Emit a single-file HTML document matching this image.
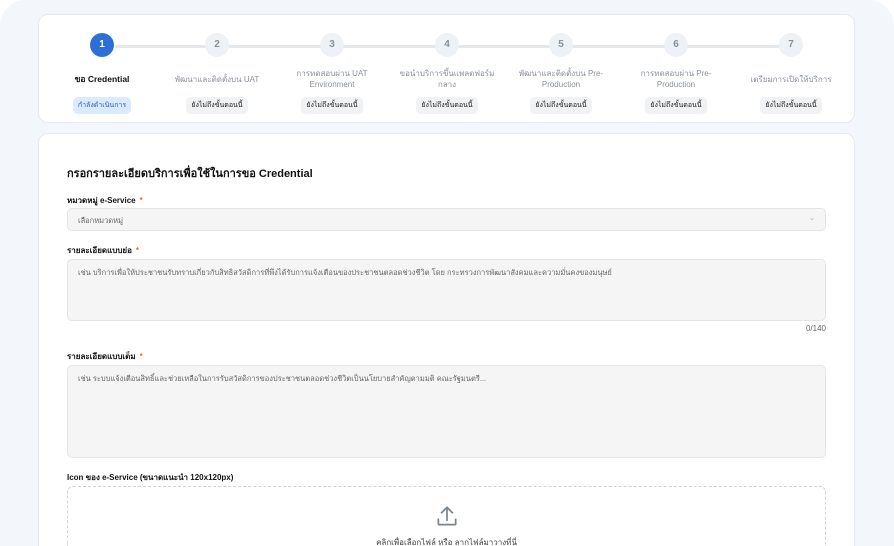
<!DOCTYPE html>
<html style="width:894px;height:546px;overflow:hidden"><head><meta charset="utf-8"><style>
*{box-sizing:border-box;margin:0;padding:0}
body{width:894px;height:546px;overflow:hidden;background:#fff;font-family:"Liberation Sans","DejaVu Sans",sans-serif;position:relative}
.bg{position:absolute;left:0;top:0;width:894px;height:546px;background:#f3f6fa;border-radius:26px 26px 0 0}
.card{position:absolute;left:38px;width:817px;background:#fff;border:1px solid #e6e9ef;border-radius:10px}
.line{position:absolute;top:45px;height:3px;background:#e5e7eb}
.step{position:absolute;width:110px;margin-left:-55px;text-align:center}
.c{width:24px;height:24px;border-radius:50%;background:#eef1f5;color:#8a919c;font-size:10px;font-weight:bold;line-height:24px;margin:0 auto}
.c.a{background:#2d6fd6;color:#fff}
.lb{height:24px;display:flex;align-items:center;justify-content:center;font-size:8px;color:#8a919c;line-height:11px;margin-top:10px}
.lb.a{color:#111;font-weight:bold;font-size:8.5px}
.bd{display:inline-block;margin-top:6px;font-size:7px;padding:3px 5px;border-radius:5px;background:#f1f2f4;color:#222}
.bd.a{background:#dbeafe;color:#1d5fc8}
.t{position:absolute;left:67px;font-size:8px;color:#111;font-weight:bold}
.st{color:#e8742a;margin-left:4px}
.f{position:absolute;left:67px;width:759px;background:#f5f5f5;border:1px solid #e5e5e5;border-radius:5px;font-size:7.5px;color:#666;padding:7px 10px}
</style></head><body>
<div class="bg"></div>
<div class="card" style="top:14px;height:109px">
<div class="line" style="left:76px;width:680px;top:30px"></div>
</div>
<div class="step" style="left:102px;top:33px"><div class="c a">1</div><div class="lb a">ขอ Credential</div><span class="bd a">กำลังดำเนินการ</span></div>
<div class="step" style="left:217px;top:33px"><div class="c">2</div><div class="lb">พัฒนาและติดตั้งบน UAT</div><span class="bd">ยังไม่ถึงขั้นตอนนี้</span></div>
<div class="step" style="left:332px;top:33px"><div class="c">3</div><div class="lb">การทดสอบผ่าน UAT<br>Environment</div><span class="bd">ยังไม่ถึงขั้นตอนนี้</span></div>
<div class="step" style="left:447px;top:33px"><div class="c">4</div><div class="lb">ขอนำบริการขึ้นแพลตฟอร์ม<br>กลาง</div><span class="bd">ยังไม่ถึงขั้นตอนนี้</span></div>
<div class="step" style="left:561px;top:33px"><div class="c">5</div><div class="lb">พัฒนาและติดตั้งบน Pre-<br>Production</div><span class="bd">ยังไม่ถึงขั้นตอนนี้</span></div>
<div class="step" style="left:676px;top:33px"><div class="c">6</div><div class="lb">การทดสอบผ่าน Pre-<br>Production</div><span class="bd">ยังไม่ถึงขั้นตอนนี้</span></div>
<div class="step" style="left:791px;top:33px"><div class="c">7</div><div class="lb">เตรียมการเปิดให้บริการ</div><span class="bd">ยังไม่ถึงขั้นตอนนี้</span></div>

<div class="card" style="top:133px;height:413px;border-bottom:none;border-radius:10px 10px 0 0"></div>
<div class="t" style="top:164px;font-size:11px">กรอกรายละเอียดบริการเพื่อใช้ในการขอ Credential</div>
<div class="t" style="top:194px">หมวดหมู่ e-Service<span class="st">*</span></div>
<div class="f" style="top:208px;height:23px;padding-top:6px">เลือกหมวดหมู่<span style="position:absolute;right:10px;top:4px;color:#aaa">⌄</span></div>
<div class="t" style="top:244px">รายละเอียดแบบย่อ<span class="st">*</span></div>
<div class="f" style="top:259px;height:62px">เช่น บริการเพื่อให้ประชาชนรับทราบเกี่ยวกับสิทธิสวัสดิการที่พึงได้รับการแจ้งเตือนของประชาชนตลอดช่วงชีวิต โดย กระทรวงการพัฒนาสังคมและความมั่นคงของมนุษย์</div>
<div style="position:absolute;left:700px;width:126px;text-align:right;top:324px;font-size:8px;color:#666">0/140</div>
<div class="t" style="top:350px">รายละเอียดแบบเต็ม<span class="st">*</span></div>
<div class="f" style="top:365px;height:93px">เช่น ระบบแจ้งเตือนสิทธิ์และช่วยเหลือในการรับสวัสดิการของประชาชนตลอดช่วงชีวิตเป็นนโยบายสำคัญตามมติ คณะรัฐมนตรี...</div>
<div class="t" style="top:471px">Icon ของ e-Service (ขนาดแนะนำ 120x120px)</div>
<div style="position:absolute;left:67px;top:486px;width:759px;height:60px;border:1px dashed #d0d4da;border-bottom:none;border-radius:6px 6px 0 0"></div>
<svg style="position:absolute;left:434px;top:503px" width="26" height="26" viewBox="0 0 24 24" fill="none" stroke="#7b8390" stroke-width="1.6" stroke-linecap="round" stroke-linejoin="round"><path d="M4 15v4a1 1 0 0 0 1 1h14a1 1 0 0 0 1-1v-4M12 16V4M7 9l5-5 5 5"/></svg>
<div style="position:absolute;left:67px;width:759px;text-align:center;top:536px;height:10px;overflow:hidden;font-size:8px;color:#444">คลิกเพื่อเลือกไฟล์ หรือ ลากไฟล์มาวางที่นี่</div>
</body></html>
